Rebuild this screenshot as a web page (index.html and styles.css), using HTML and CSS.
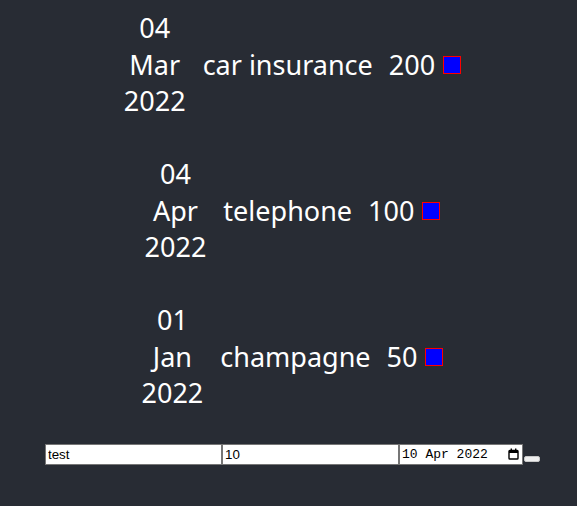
FILE: index.html
```html
<!DOCTYPE html>
<html lang="en">
<head>
<meta charset="utf-8">
<title>Expenses</title>
<link rel="stylesheet" href="styles.css">
</head>
<body>
<div class="app">
  <div class="list">
    <div class="item">
      <div class="date"><div>04</div><div>Mar</div><div>2022</div></div>
      <div class="desc">car insurance</div>
      <div class="amount">200</div>
      <button class="del" type="button"></button>
    </div>
    <div class="item">
      <div class="date"><div>04</div><div>Apr</div><div>2022</div></div>
      <div class="desc">telephone</div>
      <div class="amount">100</div>
      <button class="del" type="button"></button>
    </div>
    <div class="item">
      <div class="date"><div>01</div><div>Jan</div><div>2022</div></div>
      <div class="desc">champagne</div>
      <div class="amount">50</div>
      <button class="del" type="button"></button>
    </div>
  </div>
  <form class="form">
    <input class="field" type="text" value="test">
    <input class="field" type="text" value="10">
    <div class="datefield">
      <span class="datetext">10 Apr 2022</span>
      <svg class="cal" width="11" height="12" viewBox="0 0 11 12">
        <rect x="1" y="2.5" width="9" height="8.5" fill="none" stroke="#000" stroke-width="1.4" rx="0.8"/>
        <rect x="1" y="2.5" width="9" height="2.5" fill="#000"/>
        <rect x="2.6" y="0.5" width="1.4" height="2.5" fill="#000"/>
        <rect x="7" y="0.5" width="1.4" height="2.5" fill="#000"/>
      </svg>
    </div>
    <button class="submit" type="submit"></button>
  </form>
</div>
</body>
</html>
```
FILE: styles.css
```css
html, body {
  margin: 0;
  padding: 0;
  background: #282c34;
}
.app {
  min-height: 506px;
  box-sizing: border-box;
  padding-top: 10px;
  padding-left: 8px;
  display: flex;
  flex-direction: column;
  align-items: center;
  color: #fff;
  font-family: "Noto Sans", "Open Sans", sans-serif;
  font-size: 27px;
  line-height: 36.5px;
}
.list {
  display: flex;
  flex-direction: column;
  align-items: center;
}
.item {
  display: flex;
  align-items: center;
  margin-bottom: 36.5px;
}
.item:last-child {
  margin-bottom: 32px;
}
.date {
  display: flex;
  flex-direction: column;
  align-items: center;
}
.desc {
  margin-left: 17px;
}
.amount {
  margin-left: 16px;
}
.del {
  margin-left: 8px;
  width: 18px;
  height: 18px;
  padding: 0;
  border: 1px solid #ff0000;
  background: #0000ff;
  border-radius: 0;
}
.form {
  display: flex;
  align-items: flex-start;
}
.field {
  box-sizing: border-box;
  width: 177px;
  height: 21px;
  margin: 0;
  padding: 1px 2px;
  border: 1px solid #767676;
  border-radius: 0;
  background: #fff;
  color: #000;
  font-family: "Liberation Sans", Arial, sans-serif;
  font-size: 13.33px;
}
.datefield {
  box-sizing: border-box;
  width: 124px;
  height: 21px;
  border: 1px solid #767676;
  background: #fff;
  display: flex;
  align-items: center;
  justify-content: space-between;
  padding: 0 3px 0 2px;
  line-height: 19px;
}
.datetext {
  color: #000;
  font-family: "Liberation Mono", "DejaVu Sans Mono", monospace;
  font-size: 13px;
}
.cal {
  display: block;
}
.submit {
  box-sizing: border-box;
  margin: 12px 0 0 1px;
  width: 16px;
  height: 6px;
  padding: 0;
  background: #efefef;
  border: 1px solid #c8c8c8;
  border-radius: 2px;
}
```
